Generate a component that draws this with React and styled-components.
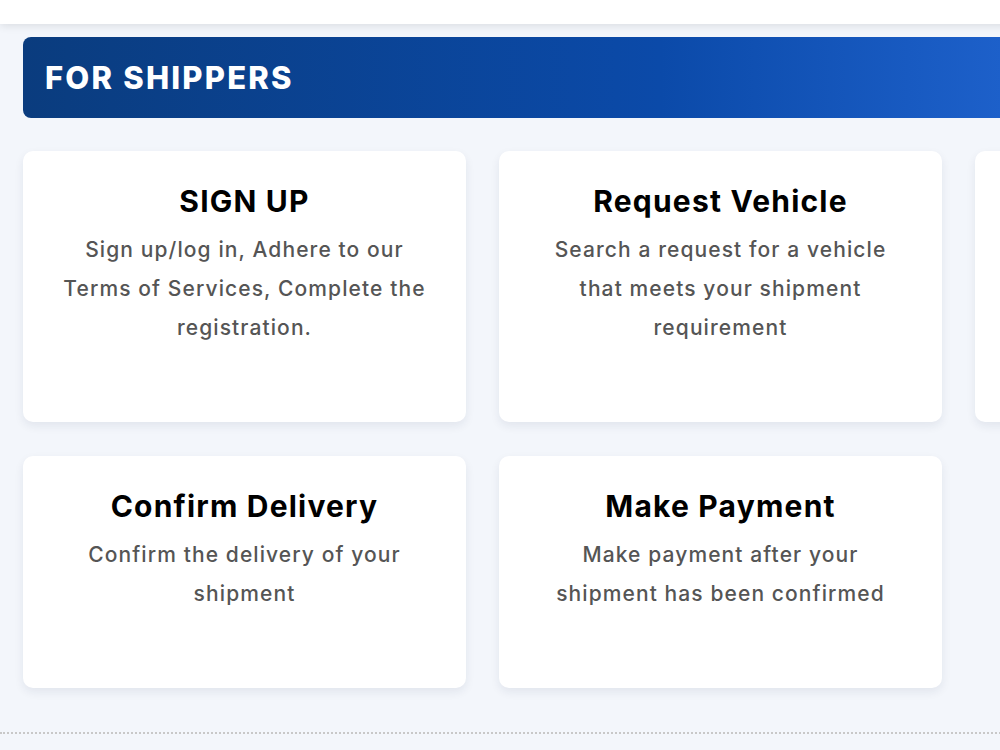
import React from "react";
import styled, { createGlobalStyle } from "styled-components";

const Global = createGlobalStyle`
  html, body {
    margin: 0;
    padding: 0;
    overflow: hidden;
    background: #f3f6fb;
    font-family: Inter, "Open Sans", sans-serif;
  }
`;

const Page = styled.div`
  width: 1441px;
  min-height: 750px;
  background: #f3f6fb;
`;

const TopBar = styled.header`
  height: 24px;
  background: #ffffff;
  box-shadow: 0 2px 8px rgba(0, 0, 0, 0.1);
  position: relative;
  z-index: 1;
`;

const Section = styled.section`
  padding: 13px 0 0 23px;
`;

const Banner = styled.div`
  height: 81px;
  border-radius: 8px;
  display: flex;
  align-items: center;
  padding-left: 22px;
  background: linear-gradient(90deg, #0a3c7e 0%, #0b4aa9 45%, #1d60ca 69%, #3b80ee 100%);
`;

const BannerTitle = styled.h2`
  margin: 0;
  color: #ffffff;
  font-size: 31px;
  font-weight: 800;
  letter-spacing: 2.2px;
`;

const Grid = styled.div`
  margin-top: 33px;
  display: grid;
  grid-template-columns: repeat(3, 443px);
  column-gap: 33px;
  row-gap: 34px;
`;

const Card = styled.div`
  background: #ffffff;
  border-radius: 10px;
  box-shadow: 0 4px 10px rgba(20, 40, 80, 0.08);
  padding: 33px 36px 75px;
  text-align: center;
`;

const CardTitle = styled.h3`
  margin: 0 0 11px;
  font-size: 30px;
  line-height: 35px;
  font-weight: 700;
  color: #000000;
  letter-spacing: 1.2px;
`;

const CardText = styled.p`
  margin: 0;
  font-size: 21px;
  line-height: 39px;
  font-weight: 500;
  color: #555555;
  letter-spacing: 1.1px;
`;

const Divider = styled.div`
  margin-top: 44px;
  border-top: 2px dotted #c8c8c8;
`;

const steps = [
  {
    title: "SIGN UP",
    text: "Sign up/log in, Adhere to our Terms of Services, Complete the registration.",
  },
  {
    title: "Request Vehicle",
    text: "Search a request for a vehicle that meets your shipment requirement",
  },
  {
    title: "Track Shipment",
    text: "Track your shipment in real time until it gets to its destination",
  },
  {
    title: "Confirm Delivery",
    text: "Confirm the delivery of your shipment",
  },
  {
    title: "Make Payment",
    text: "Make payment after your shipment has been confirmed",
  },
];

export default function App() {
  return (
    <Page>
      <Global />
      <TopBar />
      <Section>
        <Banner>
          <BannerTitle>FOR SHIPPERS</BannerTitle>
        </Banner>
        <Grid>
          {steps.map((s) => (
            <Card key={s.title}>
              <CardTitle>{s.title}</CardTitle>
              <CardText>{s.text}</CardText>
            </Card>
          ))}
        </Grid>
      </Section>
      <Divider />
    </Page>
  );
}
